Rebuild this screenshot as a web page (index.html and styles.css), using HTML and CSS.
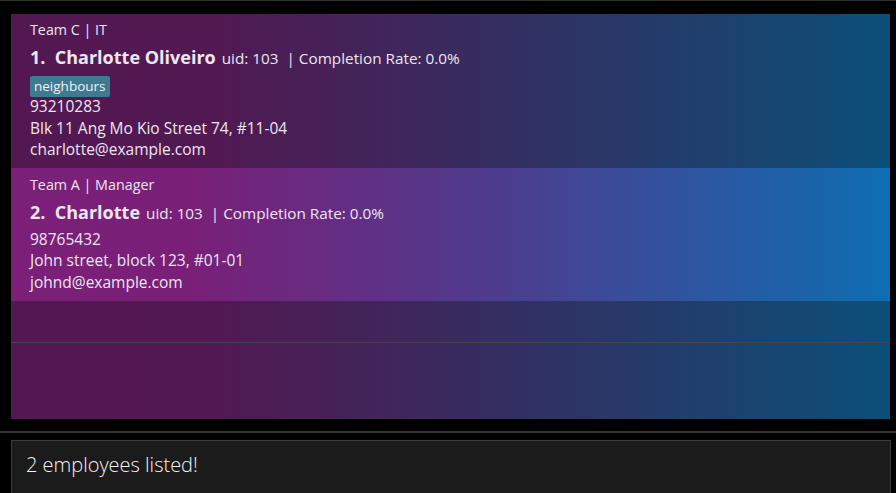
FILE: index.html
```html
<!DOCTYPE html>
<html>
<head>
<meta charset="utf-8">
<link rel="stylesheet" href="styles.css">
</head>
<body>
<div class="app">
  <div class="list-wrap">
    <div class="list">
      <div class="card first">
        <div class="team">Team C | IT</div>
        <div class="name-row"><span class="name">1.&nbsp; Charlotte Oliveiro</span><span class="meta">uid: 103 &nbsp;| Completion Rate: 0.0%</span></div>
        <div class="tags"><span class="tag">neighbours</span></div>
        <div class="line">93210283</div>
        <div class="line">Blk 11 Ang Mo Kio Street 74, #11-04</div>
        <div class="line">charlotte@example.com</div>
      </div>
      <div class="card selected">
        <div class="team">Team A | Manager</div>
        <div class="name-row"><span class="name">2.&nbsp;&nbsp;Charlotte</span><span class="meta">uid: 103 &nbsp;| Completion Rate: 0.0%</span></div>
        <div class="line">98765432</div>
        <div class="line">John street, block 123, #01-01</div>
        <div class="line">johnd@example.com</div>
      </div>
      <div class="empty"><div class="rule"></div></div>
    </div>
  </div>
  <div class="sep"></div>
  <div class="result-wrap">
    <div class="result">2 employees listed!</div>
  </div>
</div>
</body>
</html>
```
FILE: styles.css
```css
html, body {
  margin: 0;
  padding: 0;
  background: #000;
  height: 100%;
  overflow: hidden;
}
.app {
  border-top: 1px solid #2e2e2e;
  font-family: "Open Sans", "Noto Sans", sans-serif;
  color: #ece6f0;
}
.list-wrap {
  padding: 13px 6px 0 11px;
}
.list {
  height: 405px;
  display: flex;
  flex-direction: column;
  background: linear-gradient(to right, #531852 0%, #521852 22%, #3a2a5e 50%, #0b4f78 100%);
}
.card {
  padding: 6px 0 6px 19px;
  background: linear-gradient(to right, #531852 0%, #521852 22%, #3a2a5e 50%, #0b4f78 100%);
}
.card.first {
  padding-bottom: 7px;
}
.card.selected {
  background: linear-gradient(to right, #7b1f78 0%, #7a1f78 20%, #4e3c8e 55%, #0e6eb2 100%);
  padding-top: 7px;
  padding-bottom: 8px;
}
.team {
  font-size: 14.3px;
  line-height: 20px;
}
.name-row {
  display: flex;
  align-items: baseline;
  height: 34px;
  line-height: 34px;
}
.name {
  font-size: 18px;
  font-weight: 700;
  margin-right: 6px;
}
.meta {
  font-size: 15.3px;
}
.tags {
  height: 22px;
}
.tag {
  display: inline-block;
  background: #3e7b91;
  color: #f2f2f2;
  font-size: 13.5px;
  line-height: 21px;
  padding: 0 4px;
  border-radius: 2px;
}
.line {
  font-size: 15.5px;
  line-height: 21.5px;
}
.empty {
  flex: 1;
  padding-top: 41px;
}
.rule {
  height: 1px;
  background: #46434c;
}
.sep {
  margin-top: 12px;
  height: 2px;
  background: #333;
}
.result-wrap {
  padding: 7px 5px 0 11px;
}
.result {
  height: 60px;
  background: #1b1b1b;
  border: 1px solid #3c3c3c;
  box-sizing: border-box;
  padding: 10px 14px;
  font-size: 20px;
  font-weight: 300;
  color: #f4f4f4;
  line-height: 28px;
}
```
